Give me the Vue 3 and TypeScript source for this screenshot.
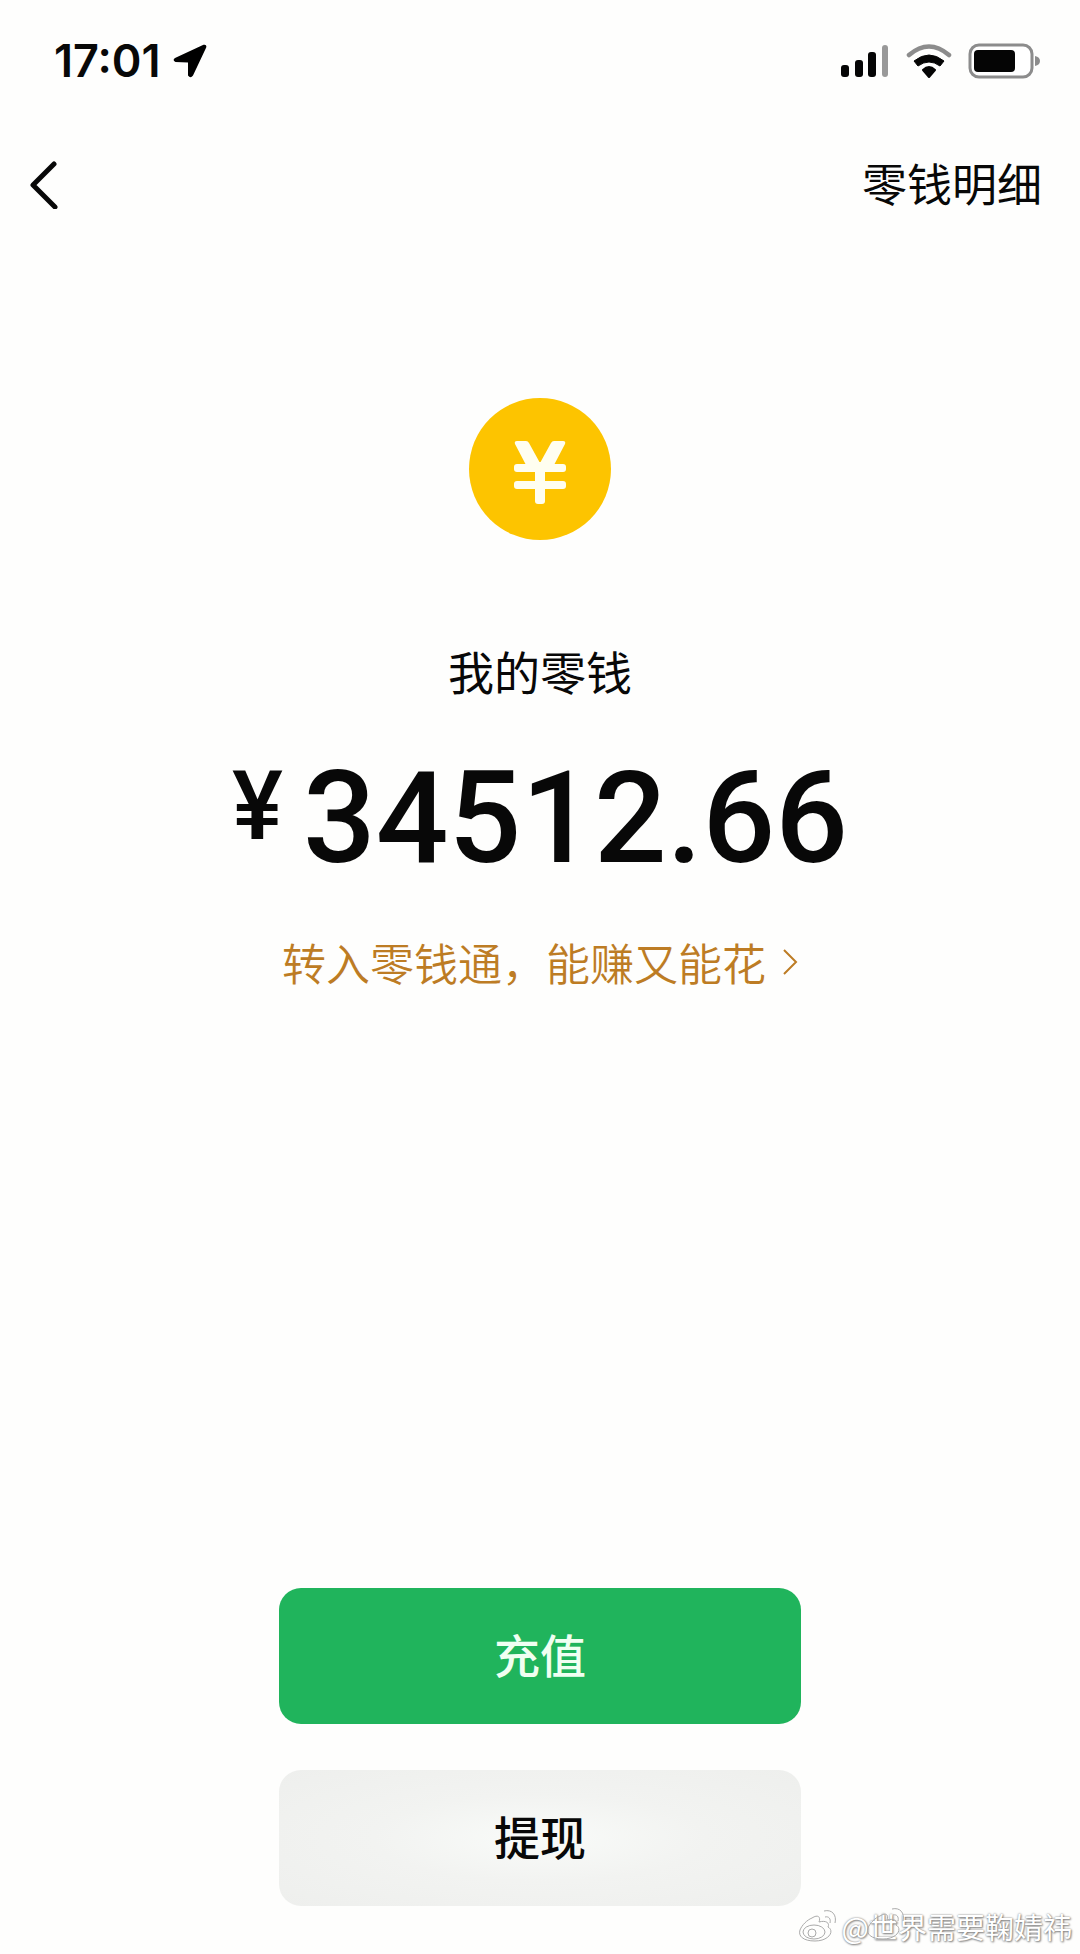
<script setup lang="ts">
interface Bar {
  x: number
  y: number
  h: number
  dim: boolean
}

const time = '17:01'
const balance = '34512.66'

const bars: Bar[] = [
  { x: 1, y: 21, h: 12, dim: false },
  { x: 15, y: 16, h: 17, dim: false },
  { x: 28, y: 8, h: 25, dim: false },
  { x: 42, y: 1, h: 32, dim: true },
]
</script>

<template>
  <div class="screen">
    <header class="status">
      <div class="clock">
        <span>{{ time }}</span>
        <svg class="arrow" viewBox="0 0 34 34" aria-hidden="true">
          <path d="M30.500 .8 Q34 0 33.200 3.500 L20 31.500 Q17.500 35 15 31.500 L15 18.500 L2.500 18 Q-1 16.500 2 14 Z" />
        </svg>
      </div>
      <div class="indicators">
        <svg class="signal" viewBox="0 0 50 34" aria-hidden="true">
          <rect
            v-for="bar in bars"
            :key="bar.x"
            :x="bar.x"
            :y="bar.y"
            :height="bar.h"
            :width="bar.dim ? 6 : 8"
            rx="3"
            :fill="bar.dim ? '#999' : '#050505'"
          />
        </svg>
        <svg class="wifi" viewBox="0 0 46 34" aria-hidden="true">
          <path d="M3 11 Q23 -6 43 11" fill="none" stroke="#8c8c8c" stroke-width="4.500" stroke-linecap="round" />
          <path d="M8 17 Q23 5 38 17 L34 22 Q23 14 12 22 Z" fill="#050505" stroke="#050505" stroke-linejoin="round" />
          <path d="M17 26 Q23 20 29 26 L23 33 Z" fill="#050505" stroke="#050505" stroke-width="2" stroke-linejoin="round" />
        </svg>
        <svg class="battery" viewBox="0 0 72 36" aria-hidden="true">
          <rect x="2" y="2" width="62" height="32" rx="9" fill="#fff" stroke="#8c8c8c" stroke-width="3" />
          <rect x="6" y="7" width="41" height="22" rx="4" fill="#050505" />
          <path d="M67 13 Q72 14 72 18 Q72 22 67 23 Z" fill="#8c8c8c" />
        </svg>
      </div>
    </header>

    <nav class="nav">
      <button class="back" type="button" aria-label="返回">
        <svg viewBox="0 0 28 48" aria-hidden="true">
          <path d="M24 3 L3 24 L25 46" />
        </svg>
      </button>
      <a class="detail" href="#">零钱明细</a>
    </nav>

    <main class="wallet">
      <svg class="coin" viewBox="0 0 142 142" aria-hidden="true">
        <circle cx="71" cy="71" r="71" fill="#fdc400" />
        <g fill="#fffef0">
          <path d="M48 43 H57 Q59 43 60 45 L71 65 L82 45 Q83 43 85 43 H94 Q97 43 96 46 L85 67 H57 L46 46 Q45 43 48 43 Z" />
          <rect x="45" y="66" width="52" height="8" rx="3" />
          <rect x="45" y="83" width="52" height="8" rx="3" />
          <rect x="66" y="64" width="10" height="42" rx="3" />
        </g>
      </svg>
      <h1 class="title">我的零钱</h1>
      <p class="amount"><span class="yen">¥</span><span>{{ balance }}</span></p>
      <a class="promo" href="#">
        <span>转入零钱通，能赚又能花</span>
        <svg viewBox="0 0 16 28" aria-hidden="true"><path d="M2 2 L14 14 L2 26" /></svg>
      </a>
    </main>

    <footer class="actions">
      <button class="action primary" type="button">充值</button>
      <button class="action secondary" type="button">提现</button>
    </footer>

    <div class="watermark">
      <svg class="weibo ghost" viewBox="0 0 40 36" aria-hidden="true">
        <path d="M14 10 C20 6 23 9 21 14 C28 12 32 15 30 19 C37 23 31 33 17 33 C5 33 0 28 2 22 C4 17 9 12 14 10 Z" />
        <path d="M26 3 C34 1 39 7 37 15 M27 9 C31 8 33 11 32 15" />
      </svg>
      <svg class="weibo" viewBox="0 0 40 36" aria-hidden="true">
        <path d="M14 10 C20 6 23 9 21 14 C28 12 32 15 30 19 C37 23 31 33 17 33 C5 33 0 28 2 22 C4 17 9 12 14 10 Z" />
        <ellipse cx="16" cy="24" rx="11" ry="7" />
        <circle cx="14" cy="25" r="4" />
        <path d="M26 3 C34 1 39 7 37 15 M27 9 C31 8 33 11 32 15" />
      </svg>
      <span>@世界需要鞠婧祎</span>
    </div>
  </div>
</template>

<style>
body {
  margin: 0;
  background: #fefefd;
}
</style>

<style scoped>
.screen {
  position: relative;
  display: flex;
  flex-direction: column;
  box-sizing: border-box;
  min-height: 100vh;
  padding-bottom: 48px;
  background: #fefefd;
  color: #080808;
  font-family: "Noto Sans CJK SC", sans-serif;
  overflow: hidden;
}

svg {
  display: block;
  flex: none;
}

a {
  text-decoration: none;
}

button {
  padding: 0;
  border: 0;
  font: inherit;
  cursor: pointer;
}

.status {
  display: flex;
  align-items: center;
  justify-content: space-between;
  height: 122px;
  padding: 0 40px 0 54px;
}

.clock {
  display: flex;
  align-items: center;
  gap: 12px;
  font: 600 45px/48px Inter, sans-serif;
}

.arrow {
  width: 34px;
  height: 34px;
}

.indicators {
  display: flex;
  align-items: center;
  gap: 16px;
}

.signal {
  width: 50px;
  height: 34px;
}

.wifi {
  width: 46px;
  height: 34px;
}

.battery {
  width: 72px;
  height: 36px;
}

.nav {
  display: flex;
  align-items: center;
  justify-content: space-between;
  height: 126px;
  padding: 0 38px 0 30px;
}

.back {
  background: none;
}

.back svg {
  width: 28px;
  height: 48px;
  fill: none;
  stroke: #080808;
  stroke-width: 5;
  stroke-linecap: round;
  stroke-linejoin: round;
}

.detail {
  padding-bottom: 4px;
  color: #080808;
  font-size: 45px;
  line-height: 64px;
}

.wallet {
  display: flex;
  flex-direction: column;
  align-items: center;
  padding-top: 150px;
}

.coin {
  width: 142px;
  height: 142px;
}

.title {
  margin: 98px 0 0;
  font-size: 46px;
  font-weight: 400;
  line-height: 64px;
}

.amount {
  display: flex;
  align-items: flex-start;
  gap: 20px;
  margin: 38px 0 0;
  font: 500 128px/156px Roboto, sans-serif;
}

.yen {
  font-size: 96px;
  line-height: 132px;
}

.promo {
  display: flex;
  align-items: center;
  gap: 16px;
  margin-top: 34px;
  color: #bd7c24;
  font-size: 44px;
  font-weight: 350;
  line-height: 64px;
}

.promo svg {
  width: 16px;
  height: 28px;
  fill: none;
  stroke: #bd7c24;
  stroke-width: 2;
}

.actions {
  display: flex;
  flex-direction: column;
  align-items: center;
  gap: 46px;
  margin-top: auto;
}

.action {
  width: 522px;
  max-width: 90%;
  height: 136px;
  padding-bottom: 6px;
  border-radius: 22px;
  font-size: 46px;
  font-weight: 500;
  line-height: 64px;
}

.primary {
  background: #20b45c;
  color: #f0fff2;
}

.secondary {
  background: radial-gradient(ellipse at center, #f9fbf9 0%, #f2f3f1 45%, #eeefed 100%);
  color: #080808;
}

.watermark {
  position: absolute;
  right: 8px;
  bottom: 8px;
  display: flex;
  align-items: center;
  gap: 4px;
  color: #fff;
  font-size: 29px;
  line-height: 40px;
  text-shadow: 0 0 2px #777, 1px 1px 2px #888;
}

.weibo {
  width: 40px;
  height: 36px;
  fill: none;
  stroke: #aaa;
  stroke-width: 1;
}

.ghost {
  position: absolute;
  left: 68px;
  bottom: 4px;
}
</style>
